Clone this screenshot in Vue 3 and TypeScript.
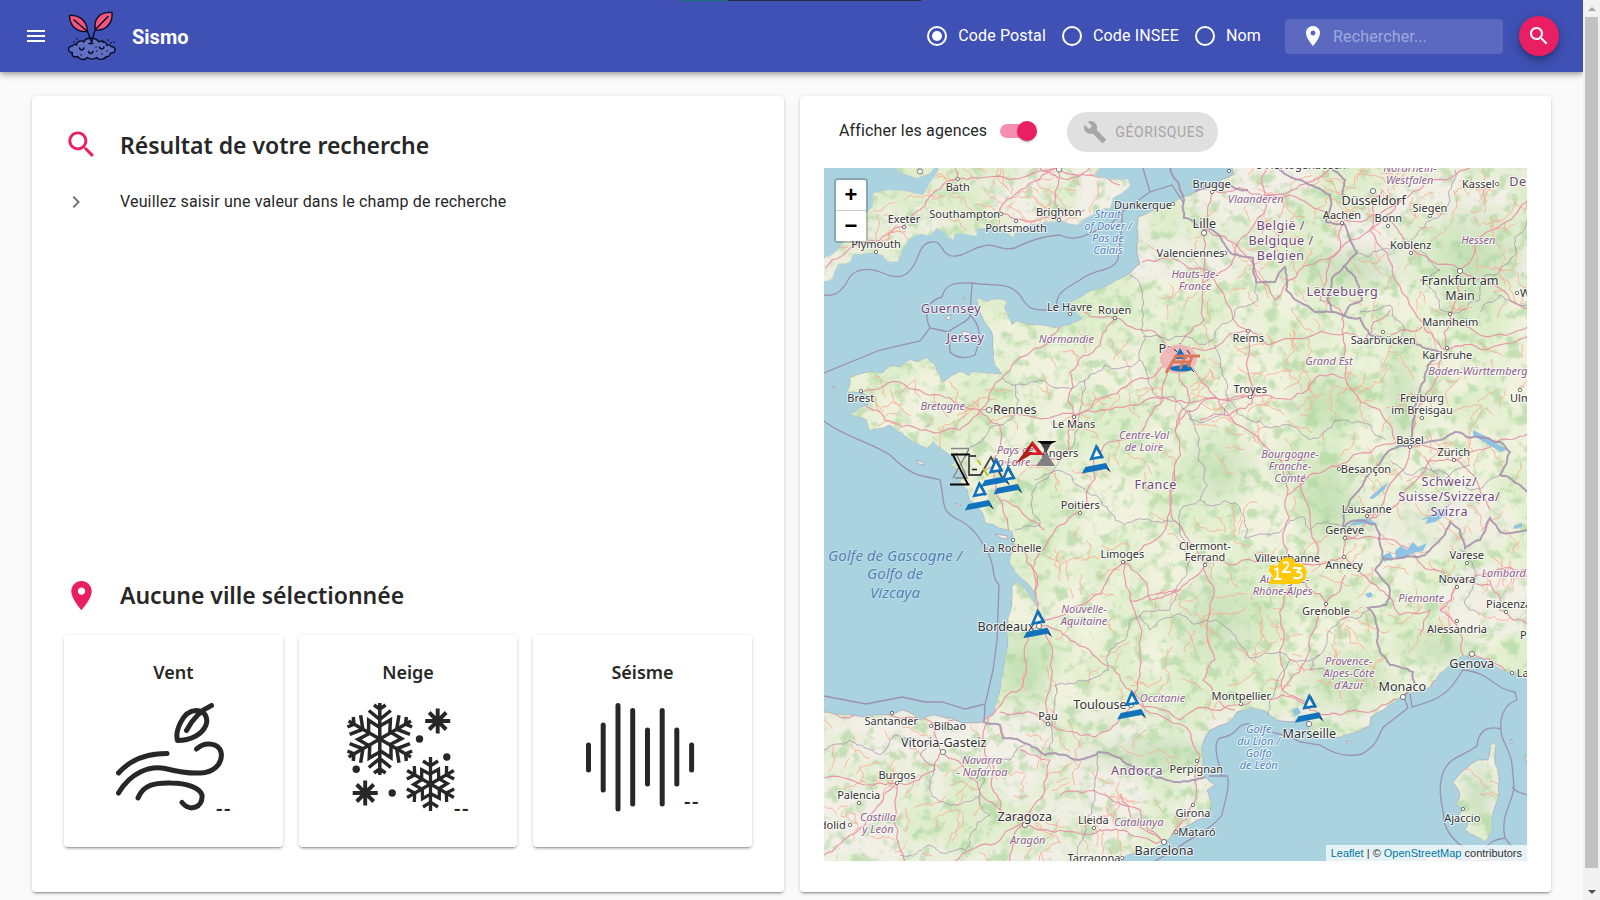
<script setup lang="ts">
import { ref } from 'vue'

type Pt = [number, number]
type Kind = 'city' | 'big' | 'region' | 'country' | 'sea' | 'ocean'
type Label = [string, number, number, Kind, ('start' | 'end')?]

const mode = ref('Code Postal')
const modes = ['Code Postal', 'Code INSEE', 'Nom']

// Deterministic pseudo-random generator, so the map is stable between renders
let seed = 7
function rnd(): number {
  seed = (seed * 16807) % 2147483647
  return seed / 2147483647
}

function parse(s: string): Pt[] {
  return s.trim().split(/\s+/).map((p) => p.split(',').map(Number) as Pt)
}

// Subdivides a polyline and shifts each midpoint to give an irregular line
function rough(s: string, amp: number, depth = 3, close = false): string {
  let pts = parse(s)
  if (close) pts.push(pts[0])
  for (let d = 0; d < depth; d++) {
    const out: Pt[] = [pts[0]]
    for (let i = 1; i < pts.length; i++) {
      const [ax, ay] = pts[i - 1]
      const [bx, by] = pts[i]
      const len = Math.hypot(bx - ax, by - ay)
      if (len > 4) {
        const k = (rnd() - 0.5) * amp * Math.min(len, 40) / 40 * 2
        out.push([(ax + bx) / 2 - ((by - ay) / len) * k, (ay + by) / 2 + ((bx - ax) / len) * k])
      }
      out.push(pts[i])
    }
    pts = out
  }
  return 'M' + pts.map((p) => p[0].toFixed(1) + ' ' + p[1].toFixed(1)).join('L') + (close ? 'Z' : '')
}

const england = rough('820,262 833,254 845,240 858,226 873,206 873,193 890,190 910,192 923,195 929,184 936,174 940,164 1102,164 1097,172 1093,176 1107,179 1128,179 1130,185 1122,193 1113,198 1110,208 1090,216 1077,225 1060,220 1038,224 1020,229 1013,237 1003,231 997,225 985,228 976,229 977,236 966,234 955,233 953,240 945,232 937,228 930,235 920,234 908,240 901,252 898,262 889,262 883,255 873,252 862,254 853,254 850,262 838,264 833,278 826,281 820,280', 3, 2, true)
const wales = 'M893 164L900 172 917 178 930 173 938 164Z'
const mainland = rough('1232,164 1234,174 1213,186 1190,195 1171,205 1138,217 1137,232 1137,252 1140,264 1130,273 1113,283 1087,293 1070,303 1074,311 1083,318 1070,325 1055,328 1033,325 1017,321 1012,325 1007,313 1004,307 1008,302 997,299 987,302 977,298 982,315 992,332 993,348 995,365 1002,374 983,373 973,372 969,376 960,372 950,377 943,382 935,365 927,358 918,362 910,360 900,367 890,366 883,373 870,372 850,378 848,392 860,392 870,396 868,405 860,408 850,415 867,420 870,430 883,428 890,425 902,433 917,443 927,448 933,441 943,450 957,457 951,465 967,475 960,481 968,490 970,500 983,513 985,522 1000,528 1012,531 1013,540 1012,550 1010,563 1024,580 1033,590 1037,606 1030,596 1017,581 1012,587 1011,610 1008,640 1005,663 1000,693 995,710 983,722 963,723 953,718 933,715 920,720 902,710 887,715 863,717 850,715 820,710 820,866 1118,866 1123,858 1134,853 1150,850 1165,843 1174,833 1197,820 1210,813 1212,803 1207,790 1215,785 1205,777 1203,760 1202,747 1210,730 1228,723 1237,712 1252,707 1263,710 1277,720 1295,721 1308,715 1309,730 1320,737 1340,737 1357,732 1370,725 1371,717 1383,710 1403,695 1430,687 1440,673 1450,665 1463,655 1483,658 1497,667 1513,673 1532,681 1532,164', 3, 2, true)
const corsica = rough('1492,742 1496,745 1495,763 1499,777 1498,800 1493,813 1492,830 1485,842 1477,837 1465,830 1468,823 1458,817 1463,810 1456,803 1460,795 1453,782 1460,773 1468,767 1478,760 1488,760 1490,752', 3, 2, true)
const islands = [
  'M946 317l5 -2 -1 5 -4 -1z', 'M962 331l9 2 -3 3 -5 -1z', 'M916 460l6 2 3 3 -6 -1z', 'M955 503l6 2 -2 2z',
  'M995 534l12 2 1 3 -7 -1z', 'M999 545l9 4 -2 2z', 'M832 386l4 2 -2 1z', 'M963 298l3 0 -1 2z',
  'M1424 861l7 -6 9 4 10 -2 14 4z', 'M1466 861l13 -7 9 -2 3 8z', 'M1346 741l6 1 -2 2z', 'M1511 739l2 3 -2 2z', 'M1525 755l3 4 -2 3z',
]

const motorways = [
  '1175,357 1204,320 1203,290 1204,230 1213,192', '1175,357 1150,330 1115,318 1084,312', '1115,318 1100,345 1070,372 1068,400 1074,415',
  '1175,357 1135,380 1095,400 1074,417 1068,450 1030,465 985,470', '1175,357 1163,400 1140,435 1096,455 1087,500 1080,513 1055,530 1035,560 1035,590 1038,625',
  '1175,357 1190,400 1175,430 1175,480 1165,530 1124,562 1130,600 1140,650 1131,700', '1175,357 1205,385 1225,410 1275,455 1287,495 1283,540 1290,560',
  '1175,357 1250,330 1268,345 1340,335 1365,340 1390,310', '1248,330 1210,270 1170,255 1142,262', '1248,330 1255,395 1230,415 1200,420',
  '1204,230 1240,250 1275,300 1320,260 1370,230 1400,200', '1213,190 1265,195 1310,205 1345,220 1385,210 1430,180 1470,168',
  '1265,195 1262,215 1240,240 1225,270 1200,290', '1265,195 1266,168', '1265,195 1300,185 1330,168', '1383,190 1370,230 1395,280 1425,330 1445,350',
  '1345,223 1340,250 1320,300 1343,315 1345,345 1348,385 1380,410 1395,440', '1460,270 1450,315 1447,350 1430,390 1415,415 1410,447',
  '1460,270 1405,245 1385,215', '1460,270 1475,245 1530,200', '1460,270 1495,285 1530,310', '1447,350 1485,350 1530,335', '1390,335 1430,320 1480,335 1530,325',
  '1290,560 1320,565 1344,558 1345,540 1370,520 1410,447', '1290,560 1310,590 1326,603 1345,575', '1290,560 1284,600 1280,650 1282,690 1310,710',
  '1290,560 1255,562 1205,563 1180,590 1150,595 1130,600', '1205,563 1210,610 1215,660 1203,680 1235,710', '1205,563 1185,535 1170,500 1175,470',
  '1124,562 1150,600 1180,590', '1038,625 1070,640 1105,665 1130,690 1145,710 1190,732 1200,755', '1131,700 1180,720 1235,705 1282,695 1310,710 1340,715 1370,712 1403,697',
  '1038,625 1025,660 1020,690 995,712', '1131,700 1110,730 1080,735 1055,728 1030,712 1000,712', '1048,725 1050,690 1048,640 1038,625',
  '1200,755 1193,805 1175,830 1165,845', '995,712 970,722 935,725 890,715 824,712', '933,725 945,755 975,780 995,805 1024,822 1060,830 1100,830 1130,835 1165,843',
  '943,752 935,770 900,783 870,785 824,778', '897,783 875,810 850,835 824,855', '897,783 898,830 905,861', '990,710 985,755 993,790 1000,810',
  '1024,822 1045,790 1050,760 1020,750', '1024,822 990,845 955,861', '1024,822 1010,861', '1165,845 1130,820 1120,795', '1165,843 1140,810 1105,795 1060,795',
  '980,410 1000,425 992,460 995,480 1000,500 1030,520 1045,530', '980,410 940,395 900,382 855,395', '980,410 960,430 920,430 885,420 865,405',
  '980,410 1010,370 1045,345 1070,320', '980,410 1050,418 1074,415 1130,405 1170,400', '1000,500 1010,540 1033,570 1035,600',
  '1344,535 1400,545 1430,570 1457,580 1490,585', '1366,518 1400,500 1430,460 1453,460 1500,440 1530,430', '1457,585 1440,610 1457,625 1463,655', '1457,580 1490,575 1530,570',
  '1490,580 1500,610 1530,625', '1344,555 1380,590 1400,615 1430,610 1420,635', '1430,687 1470,655 1505,670 1530,690', '1410,447 1453,458 1480,490 1490,510',
  '1170,400 1210,398 1250,398', '1287,495 1310,475 1340,465 1400,440', '1038,625 1090,600 1124,562', '1175,430 1205,400 1250,395',
  '1058,168 1055,200 1058,218', '1058,168 1090,175 1120,185', '1058,168 1020,190 1000,213', '1058,168 980,178 957,180 937,190 920,210 905,225',
  '957,180 955,168', '1000,213 1030,222 1058,219 1085,210', '905,225 880,240 860,245 826,268', '1040,168 1060,178 1090,168',
  '1250,395 1290,400 1320,375 1345,378', '1282,690 1310,650 1326,605', '1320,565 1310,520 1300,480 1287,470',
].map((s) => rough(s, 6))

// Secondary roads: short random strokes inside land rectangles
const zones: [number, number, number, number, number][] = [
  [1145, 225, 1525, 400, 95], [1010, 340, 1400, 560, 105], [1020, 560, 1380, 700, 80], [870, 380, 990, 435, 22],
  [826, 725, 1180, 860, 85], [1390, 400, 1525, 640, 65], [930, 170, 1110, 222, 44], [840, 205, 905, 248, 14],
  [1240, 170, 1525, 230, 55], [1470, 770, 1492, 815, 4],
]
const minors: string[] = []
for (const [x0, y0, x1, y1, n] of zones) {
  for (let i = 0; i < n; i++) {
    const x = x0 + rnd() * (x1 - x0)
    const y = y0 + rnd() * (y1 - y0)
    const a = rnd() * 6.28
    const l = 10 + rnd() * 24
    minors.push(rough(`${x},${y} ${x + Math.cos(a) * l},${y + Math.sin(a) * l}`, 9, 3))
  }
}

const borders = [
  '1170,168 1178,182 1184,200 1184,218 1200,228 1215,232 1225,245 1232,254 1253,258 1256,282 1275,282 1285,267 1286,290 1305,305 1315,312 1332,312 1345,316 1360,318 1370,335 1390,342 1420,345 1440,352 1428,365 1418,395 1413,420 1410,445 1390,450 1382,460 1365,480 1350,500 1343,528 1350,522 1375,524 1380,545 1383,558 1375,570 1390,590 1386,605 1368,608 1378,630 1380,652 1390,665 1413,672 1415,685 1405,695',
  '1343,316 1350,305 1362,300 1357,282 1344,266 1357,252 1348,235 1345,225 1326,222 1330,195 1318,188 1300,180 1275,168', '1344,266 1332,278 1327,300 1332,312',
  '1330,168 1345,180 1343,200', '1410,445 1440,440 1455,432 1470,438 1500,442 1510,452 1500,475 1520,485 1527,492', '1383,558 1400,558 1425,555 1440,540 1450,522 1460,530 1465,548 1480,540 1490,518 1500,532 1527,530',
  '983,722 1000,725 1003,738 1030,745 1045,755 1065,755 1080,760 1096,755 1098,752 1120,758 1135,768 1150,775 1175,782 1192,780 1205,777', '1248,190 1225,185 1195,192',
].map((s) => rough(s, 4))

const regions = [
  '1003,378 1015,385 1030,382 1065,388 1085,380 1105,365 1120,368 1140,360 1145,340 1143,300 1130,275', '1143,337 1170,340 1205,345 1215,332 1232,320 1235,310 1258,300 1256,282', '1140,360 1150,385 1155,395 1175,398 1190,420 1225,415 1228,400 1222,370 1215,345',
  '1015,385 1015,415 990,428 975,445 965,458', '1085,380 1080,410 1075,440 1060,460 1040,482 1032,500 1040,525 1015,530', '1035,480 1070,475 1095,495 1110,512 1125,525 1155,522 1180,525 1180,510 1200,500 1205,470 1195,430 1190,410',
  '1228,400 1250,420 1290,425 1310,440 1335,420 1370,425 1385,440', '1180,525 1190,560 1175,590 1170,610 1140,615 1130,620 1125,640 1110,650 1108,670 1080,680 1055,685 1052,730 1050,750', '1200,500 1215,505 1235,503 1245,520 1245,538 1270,535 1290,520 1305,518 1310,530 1340,525',
  '1140,615 1150,630 1175,615 1215,620 1230,630 1250,658 1280,652 1290,660 1320,655 1330,630 1370,610', '1290,660 1280,675 1275,690 1268,715', '1320,655 1310,670 1330,670', '930,738 920,755 935,765 930,790 950,805 980,795 985,770 1010,760 1025,745',
  '980,795 990,815 970,835 965,850 930,845 900,855', '1098,755 1095,800 1085,825 1080,860', '1420,250 1440,270 1420,280 1440,310 1460,312 1480,300 1485,275 1510,260 1527,220', '1455,170 1450,200 1420,230 1380,250 1355,255', '1480,312 1500,295 1527,305', '824,750 850,740 880,755 895,735 920,740',
  '1360,312 1390,305 1403,325 1400,340', '1390,460 1410,475 1440,470 1470,490 1500,475', '1460,550 1475,580 1465,600 1480,615', '1425,460 1440,480 1470,465',
].map((s) => rough(s, 7, 4))

const maritime = [
  'M824 295C835 297 843 290 848 280C854 268 866 268 878 271C895 279 905 280 914 265C920 254 920 243 932 242C944 240 940 258 956 256C970 254 970 248 984 246C995 242 1000 252 1015 248C1030 240 1045 236 1060 235C1080 245 1095 228 1110 225L1122 212 1150 192 1143 168M1150 192L1172 185 1183 202',
  'M1122 212V225L1118 260C1112 272 1095 268 1080 280C1062 290 1055 295 1057 308M824 373L880 350 920 341 930 328C922 310 930 300 942 297C945 284 955 282 972 283C995 287 1010 280 1022 298C1030 312 1035 310 1057 310M972 283L970 315C980 325 982 335 975 355C965 360 955 357 950 352L949 332C955 325 970 322 970 315M930 328L949 332',
  'M824 421C840 435 870 442 890 455C915 480 925 475 940 480C945 500 940 510 955 518C975 527 980 540 987 550C997 570 990 575 999 585L997 640 993 670 985 705 984 722M985 704L965 709 942 702 925 702 902 697 866 704 824 696',
  'M1209 776H1227C1232 785 1222 810 1222 815C1212 830 1185 840 1178 848L1155 861M1222 776C1218 762 1212 742 1220 738C1240 735 1235 723 1250 724C1270 735 1285 732 1300 742L1320 745C1335 755 1350 757 1362 754C1385 740 1375 730 1390 722L1408 708 1403 694M1410 694L1412 707C1430 702 1445 697 1455 682L1463 670C1490 672 1495 690 1515 692L1517 700C1502 705 1500 720 1501 729C1500 740 1512 752 1512 765L1514 787C1512 805 1500 815 1505 838L1512 847M1501 729C1485 725 1478 733 1477 746C1460 758 1452 756 1444 770C1435 792 1445 810 1444 822C1448 835 1455 842 1465 848M1505 838C1492 840 1490 843 1485 848M1512 787C1518 794 1523 793 1527 795',
]

const labels: Label[] = [
  ['Bath', 957.7, 190.8, 'city'], ['Exeter', 904, 223, 'city'], ['Southampton', 964.7, 218, 'city'], ['Portsmouth', 1016, 232, 'city'], ['Brighton', 1058.7, 216, 'city'], ['Plymouth', 876, 248, 'city'], ['Dunkerque', 1143, 208.6, 'city'],
  ['Strait', 1107.7, 217.7, 'sea'], ['of Dover /', 1108, 229.6, 'sea'], ['Pas de', 1108, 241.6, 'sea'], ['Calais', 1108, 253.6, 'sea'],
  ['Guernsey', 951, 312.7, 'country'], ['Jersey', 965.5, 341.9, 'country'], ['Le Havre', 1069.7, 310.5, 'city'], ['Rouen', 1114.7, 314, 'city'], ['Normandie', 1066.3, 343, 'region'], ['Paris', 1173, 352.5, 'big'], ['Brest', 860.7, 401.6, 'city'],
  ['Brugge', 1211.7, 188.3, 'city'], ['Vlaanderen', 1255.7, 203, 'region'], ['Lille', 1204.3, 228, 'big'], ['België /', 1280.7, 230, 'country'], ['Belgique /', 1281, 244.8, 'country'], ['Belgien', 1280.7, 259.5, 'country'],
  ['Valenciennes', 1190.5, 256.8, 'city'], ['Hauts-de-', 1195, 278, 'region'], ['France', 1195, 289.8, 'region'], ['Düsseldorf', 1373.7, 205, 'big'], ['Aachen', 1342, 219.3, 'city'], ['Bonn', 1388.3, 222.3, 'city'], ['Siegen', 1430, 212, 'city'], ['Kassel', 1478.3, 188, 'city'],
  ["'s-Hertogenbosch", 1300, 168.5, 'city'], ['Nordrhein-', 1410, 172.4, 'region'], ['Westfalen', 1409.7, 184.4, 'region'], ['Deutschland', 1509.3, 185.5, 'country', 'start'], ['Hessen', 1478.3, 243.6, 'region'], ['Koblenz', 1410.7, 249.4, 'city'], ['Lëtzebuerg', 1342.3, 296.3, 'country'],
  ['Frankfurt am', 1460, 284.6, 'big'], ['Main', 1460, 300, 'big'], ['Würzburg', 1520, 297, 'city', 'start'], ['Mannheim', 1450.3, 325.7, 'city'], ['Reims', 1248.3, 342, 'city'], ['Saarbrücken', 1383.3, 344, 'city'], ['Karlsruhe', 1447.3, 359.4, 'city'], ['Grand Est', 1329, 365.3, 'region'], ['Baden-Württemberg', 1478, 375, 'region'],
  ['Troyes', 1250.3, 393.3, 'city'], ['Freiburg', 1422, 401.6, 'city'], ['im Breisgau', 1422, 413.6, 'city'], ['Ulm', 1510, 401.6, 'city', 'start'], ['Bretagne', 942.7, 409.8, 'region'], ['Rennes', 1014.7, 414, 'big'], ['Le Mans', 1073.7, 428, 'city'], ['Pays de', 996.7, 454, 'region', 'start'], ['la Loire', 1012.5, 465.8, 'region'], ['Angers', 1060, 457, 'city'],
  ['Centre-Val', 1144, 438.5, 'region'], ['de Loire', 1144, 450.5, 'region'], ['France', 1155.7, 488.5, 'country'], ['Poitiers', 1080.3, 509, 'city'], ['La Rochelle', 1012.3, 551.7, 'city'], ['Limoges', 1122.3, 558, 'city'],
  ['Golfe de Gascogne /', 895, 560.5, 'ocean'], ['Golfo de', 895, 579.2, 'ocean'], ['Vizcaya', 895, 597.8, 'ocean'], ['Nouvelle-', 1084, 612.5, 'region'], ['Aquitaine', 1084, 624.5, 'region'], ['Bordeaux', 1006, 631, 'big'],
  ['Bourgogne-', 1290, 457.7, 'region'], ['Franche-', 1290, 469.5, 'region'], ['Comté', 1290, 481.5, 'region'], ['Besançon', 1366, 473, 'city'], ['Basel', 1410, 443.6, 'city'], ['Zürich', 1453.7, 456, 'city'], ['Schweiz/', 1449.3, 486, 'country'], ['Suisse/Svizzera/', 1449.3, 501, 'country'], ['Svizra', 1449.3, 516, 'country'],
  ['Lausanne', 1366.7, 512.7, 'city'], ['Genève', 1344.7, 534, 'city'], ['Clermont-', 1205, 549.6, 'city'], ['Ferrand', 1205, 561.4, 'city'], ['Villeurbanne', 1287.3, 562, 'city'], ['Annecy', 1344, 569.3, 'city'], ['Auvergne-', 1260, 583, 'region', 'start'], ['Rhône-Alpes', 1282.7, 595, 'region'],
  ['Varese', 1466.7, 559, 'city'], ['Novara', 1457, 583.3, 'city'], ['Lombardia', 1481.7, 576.8, 'region', 'start'], ['Piemonte', 1421.3, 601.8, 'region'], ['Piacenza', 1486, 608.4, 'city', 'start'], ['Grenoble', 1326, 615.4, 'city'], ['Alessandria', 1457, 633, 'city'], ['Parma', 1520, 639, 'city', 'start'],
  ['Santander', 891.3, 725.3, 'city'], ['Bilbao', 950, 729.8, 'city'], ['Vitoria-Gasteiz', 943.7, 747, 'big'], ['Navarra', 982, 763.5, 'region'], ['- Nafarroa', 982, 775.5, 'region'], ['Burgos', 897, 779, 'city'], ['Palencia', 858.7, 799.3, 'city'], ['Castilla', 878, 821, 'region'], ['y León', 878, 833, 'region'], ['Valladolid', 845.7, 829, 'city', 'end'],
  ['Zaragoza', 1024.7, 820.6, 'big'], ['Aragón', 1027.7, 844, 'region'], ['Lleida', 1093.3, 824, 'city'], ['Catalunya', 1138.7, 825.6, 'region'], ['Tarragona', 1094, 861.5, 'city'], ['Andorra', 1137, 775.3, 'country'], ['Pau', 1048, 720.3, 'city'], ['Toulouse', 1100, 709, 'big'], ['Occitanie', 1162.5, 702, 'region'], ['Barcelona', 1164, 855.3, 'big'],
  ['Montpellier', 1241.3, 700.4, 'city'], ['Provence-', 1348.7, 665.4, 'region'], ['Alpes-Côte', 1349, 677.2, 'region'], ["d'Azur", 1349, 689.2, 'region'], ['Monaco', 1402.3, 691, 'big'], ['Genova', 1471.7, 668.2, 'big'], ['La Spezia', 1516.7, 677, 'city', 'start'], ['Marseille', 1309.3, 737.6, 'big'],
  ['Golfe', 1258.7, 732.8, 'sea'], ['du Lion /', 1258.7, 744.8, 'sea'], ['Golfo', 1258.7, 756.8, 'sea'], ['de León', 1258.7, 768.8, 'sea'], ['Perpignan', 1196.3, 773, 'city'], ['Girona', 1193, 817, 'city'], ['Mataró', 1197, 836, 'city'], ['Ajaccio', 1462.3, 822, 'city'],
]

const dots: [number, number, number][] = [
  [920, 171.5, 2.6], [957.7, 179, 1.7], [904, 227, 1.7], [1001, 214, 1.7], [1016, 221, 1.7], [1059, 220, 1.7], [876, 252, 1.7], [1173, 204, 1.7], [1070, 314, 1.7], [1115, 318, 1.7], [861, 391, 1.7], [1212, 192, 1.7], [1204, 233, 2.6], [1225, 253, 1.7], [1373, 191, 2.6],
  [1342, 223, 1.7], [1388, 226, 1.7], [1430, 216, 1.7], [1497, 184, 1.7], [1411, 253, 1.7], [1460, 271, 2.6], [1517, 293, 1.7], [1450, 314, 1.7], [1248, 331, 1.7], [1383, 332, 1.7], [1447, 348, 1.7], [1250, 397, 1.7], [1520, 390, 1.7], [989, 410, 2.6], [1074, 417, 1.7],
  [1080, 513, 1.7], [1013, 540, 1.7], [1123, 562, 1.7], [1039, 626, 2.6], [1422, 418, 1.7], [1339, 469, 1.7], [1410, 447, 1.7], [1454, 460, 1.7], [1367, 516, 1.7], [1345, 538, 1.7], [1205, 565, 1.7], [1344, 557, 1.7], [1467, 563, 1.7], [1457, 587, 1.7], [1506, 612, 1.7],
  [1326, 604, 1.7], [1457, 621, 1.7], [892, 713, 1.7], [931, 726, 1.7], [943, 752, 2.6], [897, 783, 1.7], [859, 803, 1.7], [850, 825, 1.7], [1025, 825, 2.6], [1094, 828, 1.7], [1122, 858, 1.7], [1048, 724, 1.7], [1131, 705, 2.6], [1164, 842, 2.6], [1241, 704, 1.7],
  [1403, 697, 2.6], [1472, 654, 2.6], [1512, 673, 1.7], [1309, 724, 2.6], [1197, 761, 1.7], [1193, 805, 1.7], [1176, 832, 1.7], [1463, 809, 1.7], [1229, 171, 1.7], [1059, 169.5, 2.6],
]

const agencies: Pt[] = [[1096.3, 444], [995.7, 457.3], [1008, 465], [979.3, 481], [1037.7, 608.7], [1131.7, 690], [1309.3, 693.3]]

// [x, top, bottom] of each bar in the seismograph pictogram
const bars: [number, number, number][] = [
  [2.5, 42, 67], [17.2, 22, 87], [32, 2.5, 106], [46.7, 7.5, 101], [61.5, 27, 81], [76.2, 7.5, 101], [90.8, 27, 81], [105.6, 42, 67],
]
const six = [0, 60, 120, 180, 240, 300]
const pinPath = 'M12 2C8.13 2 5 5.13 5 9c0 5.25 7 13 7 13s7-7.75 7-13c0-3.87-3.13-7-7-7zm0 9.5c-1.38 0-2.5-1.12-2.5-2.5s1.12-2.5 2.5-2.5 2.5 1.12 2.5 2.5-1.12 2.5-2.5 2.5z'
const searchPath = 'M15.5 14h-.79l-.28-.27C15.41 12.59 16 11.11 16 9.5 16 5.91 13.09 3 9.5 3S3 5.91 3 9.5 5.91 16 9.5 16c1.61 0 3.09-.59 4.23-1.57l.27.28v.79l5 4.99L20.49 19l-4.99-5zm-6 0C7.01 14 5 11.99 5 9.5S7.01 5 9.5 5 14 7.01 14 9.5 11.99 14 9.5 14z'
</script>

<template>
  <div class="screen">
    <div class="page">
      <header class="bar">
        <div class="strip"></div>
        <svg class="menu" viewBox="0 0 24 24"><path d="M3 18h18v-2H3v2zm0-5h18v-2H3v2zm0-7v2h18V6H3z" /></svg>
        <svg class="logo" viewBox="0 0 50 50" fill="none" stroke="#080b24" stroke-width="1.4" stroke-linecap="round" stroke-linejoin="round">
          <path d="M8 46C4.500 45.500 5 42 5.500 41.500C.500 42 0 35 5.500 35C7 32.500 9 33.500 9.500 34C10 29.500 15 29 17 31C18 26 29 26 32 31C35 29 39 30 40 34.500C42 33 43.500 34.500 44 35.500C49.500 36 49.500 42 43.500 42C43 45.500 40.500 46 39.500 45.500C37 49.300 31.500 49 29.500 46.500C26.500 48.500 23 48.500 20.500 46.500C18 49.300 13 49.300 10.500 45.500Z" fill="#6170c4" />
          <path d="M2.500 4.500C10 3.500 20 8 20.500 20.500C10 21.500 2.500 15 2.500 4.500Z" fill="#f4557a" />
          <path d="M45 1.500C33 .500 26 8 28.500 19C39 20 46 12 45 1.500Z" fill="#f4557a" />
          <path d="M7 9L20.500 20.500L24.500 31M41 5.500L28.500 18.500C26 23 26 27 24.500 32" />
          <path d="M12.500 37c.5 2.500 4 2.500 4.500 0M21.500 40.500c.5 2.500 4 2.500 4.500 0M32.500 36c.5 2.500 4 2.500 4.500 0M22 32.500h4" stroke-width="1.500" />
          <path d="M10 28h.1M7 31h.1M14 44h.1M29 36h.1M35 43h.1M30 40h.1M41 29h.1M44 32h.1M47 31h.1M40 40h.1M36 31.500h.1" stroke-width="1.500" />
        </svg>
        <div class="brand">Sismo</div>
        <div class="modes">
          <label v-for="m in modes" :key="m" class="mode" @click="mode = m">
            <svg viewBox="0 0 24 24"><circle cx="12" cy="12" r="9" fill="none" stroke="#fff" stroke-width="2" /><circle v-if="mode === m" cx="12" cy="12" r="5" /></svg>
            <span>{{ m }}</span>
          </label>
        </div>
        <div class="field">
          <svg viewBox="0 0 24 24"><path :d="pinPath" /></svg>
          <span>Rechercher...</span>
        </div>
        <button class="fab"><svg viewBox="0 0 24 24"><path :d="searchPath" /></svg></button>
      </header>

      <main class="content">
        <section class="card results">
          <div class="title"><svg viewBox="0 0 24 24"><path :d="searchPath" /></svg><h2>Résultat de votre recherche</h2></div>
          <div class="hint"><svg viewBox="0 0 24 24"><path d="M10 6L8.590 7.410 13.170 12l-4.580 4.590L10 18l6-6z" /></svg><span>Veuillez saisir une valeur dans le champ de recherche</span></div>
          <div class="title town"><svg viewBox="0 0 24 24"><path :d="pinPath" /></svg><h2>Aucune ville sélectionnée</h2></div>
          <div class="tiles">
            <article class="tile">
              <h3>Vent</h3>
              <svg class="picto" viewBox="0 0 110 109" fill="none" stroke="#272727" stroke-width="5" stroke-linecap="round" stroke-linejoin="round">
                <path d="M61.500 37.500C59 29 66 8 80 7.500C90 7.500 92 16 90 22C86 32 74 37.500 61.500 37.500ZM70.500 27.500C75 19 83 8 95.500 2.500" />
                <path d="M2.500 70C14 57 29 50.500 51 50.500" />
                <path d="M2.500 90C15 69 34 62.500 49 65.500C63 69 76 71.500 89 69.500C101 67 107 58 105 49C102.500 40 89 38 80.500 46" />
                <path d="M22 95C27 82 39 79.500 55 80C71 80 84 85 86 92C87 105 74 109 66 99.500" />
              </svg>
              <span class="value wind">--</span>
            </article>
            <article class="tile">
              <h3>Neige</h3>
              <svg class="picto" viewBox="0 0 110 109" fill="none" stroke="#272727" stroke-width="3.9">
                <g transform="translate(33.800 36)" stroke-width="3.500">
                  <g v-for="a in six" :key="a" :transform="`rotate(${a})`">
                    <path d="M0 0V-36M-5.800 -34L0 -29.800L5.800 -34M-11 -28.500L0 -19.500L11 -28.500M0 -11.500L-11.200 -18.700V-6.500" />
                  </g>
                </g>
                <g transform="translate(84.500 81)" stroke-width="3.300">
                  <g v-for="a in six" :key="a" :transform="`rotate(${a})`">
                    <path d="M0 0V-27M-7.500 -23L0 -18.200L7.500 -23M0 -9.500L-8.800 -14.300V-5" />
                  </g>
                </g>
                <g v-for="s in [[91.700, 18], [19.200, 90]]" :key="s[0]" :transform="`translate(${s[0]} ${s[1]})`">
                  <path d="M0 -12.500V12.500M-12.500 0H12.500M-8.500 -8.500L8.500 8.500M-8.500 8.500L8.500 -8.500" />
                </g>
                <g fill="#272727" stroke="none"><circle cx="73.500" cy="36" r="3.700" /><circle cx="100.800" cy="54" r="3.700" /><circle cx="10.200" cy="66.300" r="3.700" /><circle cx="46.200" cy="90" r="3.700" /></g>
              </svg>
              <span class="value snow">--</span>
            </article>
            <article class="tile">
              <h3>Séisme</h3>
              <svg class="picto" viewBox="0 0 110 109" stroke="#272727" stroke-width="5" stroke-linecap="round">
                <line v-for="b in bars" :key="b[0]" :x1="b[0]" :x2="b[0]" :y1="b[1]" :y2="b[2]" />
              </svg>
              <span class="value quake">--</span>
            </article>
          </div>
        </section>

        <section class="card map-card">
          <div class="tools">
            <span>Afficher les agences</span>
            <div class="switch"><i></i></div>
            <button class="geo" disabled>
              <svg viewBox="0 0 24 24"><path d="M22.700 19l-9.100-9.100c.9-2.300.4-5-1.500-6.900-2-2-5-2.400-7.400-1.300L9 6 6 9 1.600 4.700C.4 7.100.9 10.100 2.900 12.100c1.900 1.900 4.600 2.400 6.900 1.500l9.100 9.100c.4.4 1 .4 1.400 0l2.300-2.300c.5-.4.5-1.100.1-1.400z" /></svg>
              GÉORISQUES
            </button>
          </div>
          <div class="map">
            <svg class="tiles-layer" viewBox="824 168 703 693" width="703" height="693">
              <defs>
                <filter id="woods" x="0" y="0" width="100%" height="100%" color-interpolation-filters="sRGB">
                  <feTurbulence type="fractalNoise" baseFrequency="0.075" numOctaves="5" seed="12" />
                  <feColorMatrix values="0 0 0 0 0.68  0 0 0 0 0.84  0 0 0 0 0.62  4.200 2 0 0 -3.150" />
                </filter>
                <filter id="fields" x="0" y="0" width="100%" height="100%" color-interpolation-filters="sRGB">
                  <feTurbulence type="fractalNoise" baseFrequency="0.014" numOctaves="5" seed="4" />
                  <feColorMatrix values="0 0 0 0 0.860  0 0 0 0 0.930  0 0 0 0 0.780  0 4 0 0 -1.600" />
                </filter>
                <radialGradient id="fade"><stop offset=".2" stop-color="#a9d39d" stop-opacity=".45" /><stop offset="1" stop-color="#a9d39d" stop-opacity="0" /></radialGradient>
                <clipPath id="land"><path :d="mainland" /><path :d="england" /><path :d="wales" /><path :d="corsica" /></clipPath>
              </defs>
              <rect x="824" y="168" width="703" height="693" fill="#aad3df" />
              <g fill="#f2efe6" stroke="#a58fae" stroke-width=".6">
                <path :d="mainland" /><path :d="england" stroke="#d5cfc5" /><path :d="wales" stroke="#d5cfc5" /><path :d="corsica" />
                <path v-for="d in islands" :key="d" :d="d" />
              </g>
              <g clip-path="url(#land)">
                <rect x="824" y="280" width="703" height="430" fill="#f0f3da" opacity=".7" />
                <rect x="824" y="168" width="703" height="693" filter="url(#fields)" opacity=".8" />
                <g fill="url(#fade)">
                  <ellipse cx="1025" cy="670" rx="38" ry="55" /><ellipse cx="1400" cy="400" rx="22" ry="65" /><ellipse cx="1350" cy="270" rx="65" ry="32" /><ellipse cx="1330" cy="400" rx="50" ry="40" />
                  <ellipse cx="1160" cy="755" rx="100" ry="25" /><ellipse cx="1345" cy="680" rx="60" ry="40" /><ellipse cx="1220" cy="620" rx="60" ry="55" /><ellipse cx="1330" cy="500" rx="40" ry="60" /><ellipse cx="1475" cy="260" rx="55" ry="65" />
                  <ellipse cx="1220" cy="470" rx="45" ry="45" /><ellipse cx="1478" cy="795" rx="22" ry="40" /><ellipse cx="1440" cy="650" rx="50" ry="25" />
                </g>
                <ellipse cx="1490" cy="600" rx="55" ry="36" fill="#f3eee8" opacity=".85" />
                <rect x="824" y="168" width="703" height="693" filter="url(#woods)" opacity=".62" />
                <ellipse cx="1440" cy="525" rx="75" ry="32" fill="#f0ebe7" opacity=".35" />
                <g fill="none" stroke="#fbab92" stroke-width=".85"><path v-for="(d, i) in minors" :key="i" :d="d" /></g>
                <g fill="none" stroke="#e994a6" stroke-width="1.150"><path v-for="(d, i) in motorways" :key="i" :d="d" /></g>
              </g>
              <g fill="#8ec3e4"><path d="M1348 526l10-7 12 0 8 6-10-2-12 2z" /><path d="M1369 498l14-12 5-3-3 6-12 10z" /><path d="M1473 430l12 6 12 8 10 5-6 3-14-8-14-9z" /><path d="M1420 520l14-6 3-6 6 2 6-6-2 10-12 8-10 2 3-5z" /><path d="M1382 556l8-4 3 6-9 4z" /><path d="M1395 551l6-5 6 4 6-8 5 5 9-4-4 8-10 2-8 4-9 2z" /><path d="M1365 594l6-2 2 4-5 2z" /><path d="M1514 526l8-3 0 4-9 2z" /><path d="M1292 710l6-3 3 6-6 3z" /></g>
              <g fill="none" stroke="#a48dab">
                <path v-for="(d, i) in regions" :key="i" :d="d" stroke-width=".9" opacity=".8" />
                <path v-for="(d, i) in borders" :key="'b' + i" :d="d" stroke-width="2" opacity=".85" />
                <path v-for="(d, i) in maritime" :key="'m' + i" :d="d" stroke="#9a90b2" stroke-width="1.300" />
              </g>
              <g fill="#fff" stroke="#555" stroke-width=".8"><circle v-for="(d, i) in dots" :key="i" :cx="d[0]" :cy="d[1]" :r="d[2]" /></g>
              <g class="labels"><text v-for="(l, i) in labels" :key="i" :x="l[1]" :y="l[2]" :class="l[3]" :text-anchor="l[4] ?? 'middle'">{{ l[0] }}</text></g>

              <g fill="none">
                <path d="M951 448.500H969M969 449L953 478M955 478H967L956 453" stroke="#888" stroke-width="1.500" />
                <path d="M951 454.500H970M953 455L968 484.500M950 484.500H969.500" stroke="#050505" stroke-width="1.800" />
                <path d="M976 456H969V475H980.500L991 457L1003 479" stroke="#474747" stroke-width="1.800" />
                <path d="M972 469.500H977" stroke="#222" stroke-width="1.600" />
                <path d="M977.500 460L981 465M983 468L988 476" stroke="#b5cc18" stroke-width="2" />
              </g>
              <path d="M1037 441h20l-8 4h-6z" fill="#090909" /><path d="M1041 444h10l-5 9z" fill="#444" /><path d="M1046 452l9 14h-19z" fill="#808080" />
              <path d="M1032.500 441l-16 22 14-8h13.500zM1032 446l5 6.500h-9z" fill="#dd1a2b" fill-rule="evenodd" /><path d="M1032.500 441l-16 22 12-7 5-4h-6l5-7z" fill="#ad221d" />
              <g v-for="(a, i) in agencies" :key="'a' + i" :transform="`translate(${a[0]} ${a[1]})`">
                <path d="M9.500 19l5 9.500-5.500-4.500zM1 1l6.500 13-3 .5z" fill="#12304a" />
                <path d="M0 2.800L-5 14.800L5.700 12.700Z" fill="#f7faf5" stroke="#1272bb" stroke-width="2.600" />
                <path d="M-11 23L9.500 19L12.500 24.500L-14.500 29.500Z" fill="#1272bb" />
              </g>
              <g>
                <ellipse cx="1178.500" cy="359" rx="18.500" ry="14.500" fill="#efb6b7" opacity=".95" />
                <path d="M1180 348l-6 11h13zM1169 367l20-3 4 6q-12 3-22 0z" fill="#1272bb" />
                <path d="M1166 373l10-17h24M1172 362h19M1180 369l5-12M1188 367l4-10" fill="none" stroke="#d9775a" stroke-width="2.800" />
                <path d="M1174 349l3 3M1187 350l3 4M1192 370l2 2" stroke="#172b3a" />
              </g>
              <g>
                <path d="M1271 566l7 1 3-6 5-3 6 1 3 5 7 1 4 6-2 8-5 4h-29l4-7-4-5z" fill="#ffca05" stroke="#ffca05" stroke-width="2" stroke-linejoin="round" />
                <g fill="none" stroke="#fff" stroke-width="1.900" stroke-linejoin="round"><path d="M1274.500 570l3-2v10.500M1274 579h7.500" /><path d="M1283 563.500q4-3 5.500.5q0 3-6 8h8" /><path d="M1293 568h8l-4 4q6 0 4.500 4.500q-3 3-8 1" /></g>
              </g>
            </svg>
            <div class="zoom"><button>+</button><button>−</button></div>
            <div class="attribution"><a>Leaflet</a> | © <a>OpenStreetMap</a> contributors</div>
          </div>
        </section>
      </main>
    </div>
    <div class="scrollbar"><span class="arrow up"></span><span class="thumb"></span><span class="arrow down"></span></div>
  </div>
</template>

<style>
body { margin: 0; overflow: hidden; }
</style>

<style scoped>
.screen { display: flex; width: 1600px; height: 900px; overflow: hidden; font-family: Roboto, "Liberation Sans", sans-serif; color: #272727; }
.page { flex: 1; background: #fafafa; height: 900px; overflow: hidden; }
svg { display: block; flex: none; }
h2, h3 { margin: 0; font-family: "Noto Sans", "Open Sans", sans-serif; font-weight: 600; }
button { border: 0; padding: 0; font-family: inherit; }

.bar { position: relative; box-sizing: border-box; height: 72px; padding: 0 24px; display: flex; align-items: center; background: #3f51b5; color: #fff; fill: #fff; box-shadow: 0 2px 4px -1px rgba(0,0,0,.2), 0 4px 5px rgba(0,0,0,.14), 0 1px 10px rgba(0,0,0,.12); }
.strip { position: absolute; top: 0; left: 680px; width: 241px; height: 1px; background: linear-gradient(90deg, #18766f 48px, #252b3a 48px); }
.menu { width: 24px; height: 24px; }
.logo { width: 50px; height: 50px; margin-left: 19px; }
.brand { margin-left: 15px; font-size: 20px; font-weight: 700; letter-spacing: 0; line-height: 32px; padding-top: 2px; }
.modes { display: flex; margin-left: auto; }
.mode { display: flex; align-items: center; margin-right: 14px; font-size: 16px; line-height: 24px; letter-spacing: .15px; }
.mode svg { width: 24px; height: 24px; margin-right: 9px; }
.field { width: 218px; height: 35px; margin-left: 10px; border-radius: 4px; background: rgba(255,255,255,.15); display: flex; align-items: center; font-size: 16px; letter-spacing: .15px; color: rgba(255,255,255,.43); }
.field svg { width: 24px; margin: 0 8px 0 16px; }
.fab { width: 40px; height: 40px; border-radius: 50%; margin-left: 16px; background: #e91e63; display: grid; place-items: center; box-shadow: 0 3px 5px -1px rgba(0,0,0,.2), 0 6px 10px rgba(0,0,0,.14), 0 1px 18px rgba(0,0,0,.12); }
.fab svg { width: 24px; fill: #fff; }

.content { display: grid; grid-template-columns: 752px 751px; gap: 16px; padding: 24px 32px; }
.card, .tile { background: #fff; border-radius: 4px; box-shadow: 0 3px 1px -2px rgba(0,0,0,.2), 0 2px 2px rgba(0,0,0,.14), 0 1px 5px rgba(0,0,0,.12); }
.card { height: 796px; box-sizing: border-box; }
.results { padding: 30px 32px; display: flex; flex-direction: column; }
.title { display: flex; align-items: center; height: 36px; }
.title svg { width: 35px; height: 35px; fill: #e91e63; margin-right: 21px; }
.title h2 { font-size: 23px; line-height: 36px; padding-top: 1px; letter-spacing: -.02px; }
.hint { display: flex; align-items: center; margin-top: 27px; height: 24px; font-size: 16px; letter-spacing: .15px; }
.hint svg { width: 24px; height: 24px; fill: #757575; margin-right: 32px; padding-top: 1px; }
.town { margin-top: 364px; }
.tiles { display: grid; grid-template-columns: 219px 218px 219px; gap: 16px; margin-top: 22px; }
.town h2 { padding-top: 0; }
.tile { position: relative; height: 212px; }
.tile h3 { font-size: 18px; line-height: 28px; text-align: center; padding-top: 23px; }
.picto { width: 110px; height: 109px; margin: 17px 0 0 52px; }
.tile:nth-child(2) .picto { margin-left: 46.500px; }
.tile:nth-child(3) .picto { margin-left: 53px; }
.value { position: absolute; bottom: 27px; font: 600 20px/24px "Noto Sans", sans-serif; letter-spacing: 1.500px; }
.wind { left: 152px; }
.snow { left: 155px; }
.quake { left: 151px; bottom: 34px; }

.map-card { padding: 16px 24px; }
.tools { display: flex; align-items: center; height: 40px; margin-bottom: 16px; padding-left: 15px; font-size: 16px; letter-spacing: .15px; }
.tools > span { padding-bottom: 3px; }
.switch { position: relative; width: 34px; height: 14px; border-radius: 7px; margin: -2px 33px 0 13px; background: #f48fb1; }
.switch i { position: absolute; right: -3px; top: -3px; width: 20px; height: 20px; border-radius: 50%; background: #e91e63; box-shadow: 0 2px 1px -1px rgba(0,0,0,.2), 0 1px 3px rgba(0,0,0,.2); }
.geo { display: flex; align-items: center; width: 151px; height: 40px; border-radius: 20px; background: #e0e0e0; color: #a6a6a6; font-size: 14px; font-weight: 400; letter-spacing: .62px; }
.geo svg { width: 24px; fill: #a6a6a6; margin: 0 8px 0 16px; }
.map { position: relative; width: 703px; height: 693px; overflow: hidden; }
.labels { font: 11px "Noto Sans", sans-serif; fill: #333; paint-order: stroke; stroke: rgba(255,255,255,.75); stroke-width: 2px; stroke-linejoin: round; }
.labels .big { font-size: 12.600px; }
.labels .region { fill: #8d618b; font-style: italic; }
.labels .country { fill: #71477a; font-size: 12.600px; letter-spacing: .5px; }
.labels .sea { fill: #5083bb; font-style: italic; }
.labels .ocean { fill: #4d80b3; font-style: italic; font-size: 15.100px; stroke-width: 1px; stroke: rgba(255,255,255,.5); }
.zoom { position: absolute; left: 10px; top: 10px; width: 30px; border: 2px solid rgba(0,0,0,.2); background-clip: padding-box; border-radius: 4px; }
.zoom button { display: block; width: 30px; height: 30px; background: #fff; color: #000; font: bold 22px/30px "Liberation Sans", sans-serif; }
.zoom button:first-child { border-bottom: 1px solid #ccc; height: 31px; border-radius: 2px 2px 0 0; }
.attribution { position: absolute; right: 0; bottom: 0; padding: 0 5px; background: rgba(255,255,255,.7); font: 11px/16px "Liberation Sans", sans-serif; color: #333; }
.attribution a { color: #0078a8; }

.scrollbar { width: 17px; background: #f1f1f1; display: flex; flex-direction: column; align-items: center; }
.thumb { width: 13px; height: 851px; background: #c1c1c1; }
.arrow { width: 17px; height: 17px; display: grid; place-items: center; }
.arrow::before { content: ""; border: 4px solid transparent; border-top-width: 0; border-bottom: 4px solid #a3a3a3; }
.arrow.down { margin-top: auto; }
.arrow.down::before { border-bottom: 0; border-top: 4px solid #505050; }
</style>
